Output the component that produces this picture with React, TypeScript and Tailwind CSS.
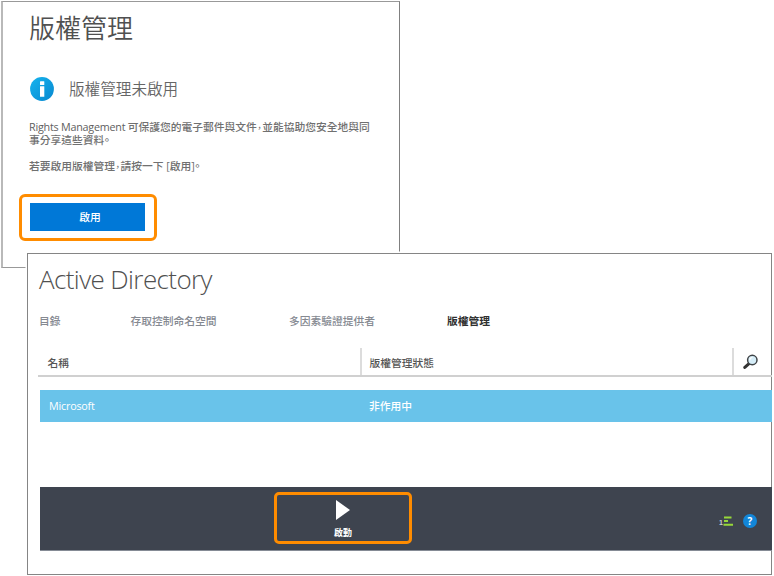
const CJK = "font-['Noto_Sans_CJK_TC',sans-serif]";
const UI = "font-['Open_Sans','Noto_Sans_CJK_TC',sans-serif]";

function Comma() {
  return <span className="mr-[0.6px] ml-[0.6px] text-[8.4px] [font-feature-settings:'halt']">，</span>;
}

function Stop() {
  return <span className="[font-feature-settings:'halt']">。</span>;
}

function InfoIcon() {
  return (
    <svg className="h-6 w-6 shrink-0" viewBox="0 0 24 24">
      <defs>
        <linearGradient id="info" x1="0" y1="0" x2="1" y2="1">
          <stop offset="0" stopColor="#16b4ee" />
          <stop offset="1" stopColor="#0888d0" />
        </linearGradient>
      </defs>
      <circle cx="12" cy="12" r="11.9" fill="url(#info)" />
      <rect x="10" y="4.2" width="4.3" height="3.7" rx="0.5" fill="#fff" />
      <rect x="10" y="9.3" width="4.3" height="10.5" rx="0.3" fill="#fff" />
    </svg>
  );
}

function SearchIcon() {
  return (
    <svg className="h-4 w-4" viewBox="0 0 16 16">
      <path d="M6.3 9.3 1.8 13.4" stroke="#333" strokeWidth="3" strokeLinecap="round" />
      <circle cx="9.3" cy="6" r="4.7" fill="#d5edf8" stroke="#404447" strokeWidth="1.5" />
      <path d="M6.8 6.2a2.6 2.6 0 0 1 2.7-2.7" fill="none" stroke="#fff" strokeWidth="1.2" />
    </svg>
  );
}

function RightsPanel() {
  return (
    <section className="ml-px h-[267px] w-[399px] shrink-0 border-y border-r border-l-2 border-t-[#999] border-r-[#808080] border-b-[#999] border-l-[#b9b9b9] bg-white pl-[27px]">
      <h1 className={`-ml-px mt-[5px] h-[40px] text-[26px] leading-[40px] font-[350] text-[#505050] whitespace-nowrap ${CJK}`}>
        版權管理
      </h1>
      <div className="mt-[30px] flex h-6 items-center gap-[15px]">
        <InfoIcon />
        <h2 className={`-mt-[2px] text-[15.6px] leading-6 font-[350] text-[#666] whitespace-nowrap ${CJK}`}>版權管理未啟用</h2>
      </div>
      <div className={`-ml-px mt-[20px] text-[10.75px] leading-[13px] font-medium text-[#707070] whitespace-nowrap ${UI}`}>
        <p>
          <span className="font-normal tracking-[-0.22px] text-[#606060]">Rights Management </span>可保護您的電子郵件與文件
          <Comma />
          並能協助您安全地與同
        </p>
        <p>
          事分享這些資料
          <Stop />
        </p>
        <p className="mt-[13px]">
          若要啟用版權管理
          <Comma />
          請按一下 [啟用]
          <Stop />
        </p>
      </div>
      <div className="-ml-[11px] mt-[21px] h-[47px] w-[138px] rounded-[6px] border-[3px] border-[#ff8c00] pt-[6px] pl-[8px]">
        <button className={`block h-[28px] w-[115px] bg-[#0078d7] pl-[5px] text-center text-[10.75px] leading-[28px] font-medium text-white ${CJK}`}>
          啟用
        </button>
      </div>
    </section>
  );
}

function DirectoryPanel() {
  return (
    <section className="relative -mt-[15px] ml-[27px] h-[322px] w-[745px] border border-[#858585] bg-white pl-[11px] shadow-[0_0_0_1.5px_#fff]">
      <h1 className={`mt-[7px] h-[36px] text-[26px] leading-[36px] font-light tracking-[-0.6px] text-[#505050] whitespace-nowrap ${UI}`}>
        Active Directory
      </h1>
      <nav className={`mt-[16px] flex h-[16px] text-[10.75px] leading-[16px] font-medium text-[#858991] whitespace-nowrap ${CJK}`}>
        <span className="w-[91.5px]">目錄</span>
        <span className="w-[158.5px]">存取控制命名空間</span>
        <span className="w-[158px]">多因素驗證提供者</span>
        <span className="font-bold text-[#303030]">版權管理</span>
      </nav>
      <div className={`-mr-px -ml-px mt-[19px] flex h-[29px] border-b-2 border-[#d0d0d0] text-[10.75px] leading-[30px] font-medium text-[#555] whitespace-nowrap ${CJK}`}>
        <div className="w-[322px] pl-[9.5px]">名稱</div>
        <div className="w-[372px] border-l-2 border-[#dcdcdc] pl-[7.5px]">版權管理狀態</div>
        <div className="flex flex-1 border-l-2 border-[#dcdcdc] pt-[6px] pl-[9px]">
          <SearchIcon />
        </div>
      </div>
      <div className={`-mr-px ml-px mt-[13px] flex h-[32px] bg-[#69c3ea] text-[10.75px] leading-[33px] text-white whitespace-nowrap ${UI}`}>
        <span className="w-[329px] pl-[9px] tracking-[-0.2px]">Microsoft</span>
        <span className="font-medium">非作用中</span>
      </div>
      <div className="-mr-px ml-px mt-[65px] flex h-[64px] items-start border-b border-[#858b95] bg-[#3e444f] pt-[5px]">
        <button className="ml-[234px] flex h-[52px] w-[138px] flex-col items-center rounded-[5px] border-[3px] border-[#ff8c00] pt-[5px]">
          <svg className="h-5 w-[14px]" viewBox="0 0 14 20">
            <path d="M0 0 14 10 0 20Z" fill="#fff" />
          </svg>
          <span className={`mt-[6px] text-[9px] leading-[14px] font-bold text-white ${CJK}`}>啟動</span>
        </button>
        <div className="ml-[307px] mt-[22px] flex h-[14px] items-center">
          <span className="w-[4px] pt-[2px] font-['Liberation_Sans',sans-serif] text-[7px] leading-none font-bold text-[#c8ccd4]">1</span>
          <svg className="h-[10px] w-[10px]" viewBox="0 0 10 10">
            <path d="M1 1.5H8.5M1 5H5M0.5 8.7H10" stroke="#97d83a" strokeWidth="2" />
          </svg>
          <span className="ml-[10px] flex h-[14px] w-[14px] items-center justify-center rounded-full bg-[#1286d8] font-['Open_Sans',sans-serif] text-[10px] leading-none font-bold text-white">
            ?
          </span>
        </div>
      </div>
    </section>
  );
}

export default function App() {
  return (
    <main className="flex h-[576px] w-[774px] flex-col overflow-hidden bg-white pt-px">
      <RightsPanel />
      <DirectoryPanel />
    </main>
  );
}
